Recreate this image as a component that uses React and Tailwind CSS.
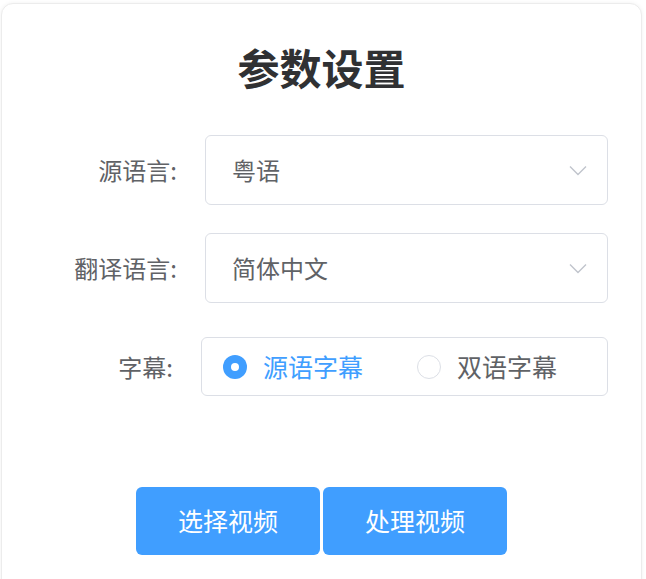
import { useState } from 'react';

const font = { fontFamily: '"Noto Sans CJK SC", "Noto Sans", sans-serif' };

function Chevron() {
  return (
    <svg width="18" height="11" viewBox="0 0 18 11" fill="none">
      <polyline points="1,1.5 9,9.5 17,1.5" stroke="#c0c4cc" strokeWidth="1.4" />
    </svg>
  );
}

function SelectBox({ value }) {
  return (
    <div className="ml-[28px] flex h-[70px] w-[403px] items-center justify-between rounded-[6px] border border-[#dcdfe6] bg-white pl-[26px] pr-[20px]">
      <span className="text-[24px] leading-none text-[#606266]">{value}</span>
      <Chevron />
    </div>
  );
}

function Radio({ checked, label, onClick }) {
  return (
    <button type="button" onClick={onClick} className="flex items-center gap-[16px]">
      {checked ? (
        <span className="flex h-[24px] w-[24px] items-center justify-center rounded-full bg-[#409eff]">
          <span className="h-[8px] w-[8px] rounded-full bg-white" />
        </span>
      ) : (
        <span className="h-[24px] w-[24px] rounded-full border border-[#dcdfe6] bg-white" />
      )}
      <span className={'text-[25px] leading-none ' + (checked ? 'text-[#409eff]' : 'text-[#606266]')}>{label}</span>
    </button>
  );
}

export default function App() {
  const [sub, setSub] = useState('source');

  return (
    <div className="min-h-[579px] bg-white pl-[1px] pr-[4px] pt-[3px]" style={font}>
      <div className="h-[600px] rounded-[12px] border border-[#ececec] bg-white shadow-[0_0_4px_rgba(0,0,0,0.06)]">
        <h1 className="pt-[42px] text-center text-[42px] font-bold leading-[42px] text-[#303133]">参数设置</h1>

        <div className="mt-[47px] flex flex-col">
          <div className="flex items-center">
            <label className="w-[175px] text-right text-[24px] leading-none text-[#606266]">源语言:</label>
            <SelectBox value="粤语" />
          </div>

          <div className="mt-[28px] flex items-center">
            <label className="w-[175px] text-right text-[24px] leading-none text-[#606266]">翻译语言:</label>
            <SelectBox value="简体中文" />
          </div>

          <div className="mt-[34px] flex items-center">
            <label className="w-[171px] text-right text-[24px] leading-none text-[#606266]">字幕:</label>
            <div className="ml-[28px] flex h-[59px] w-[407px] items-center gap-[54px] rounded-[6px] border border-[#dcdfe6] pl-[21px]">
              <Radio checked={sub === 'source'} label="源语字幕" onClick={() => setSub('source')} />
              <Radio checked={sub === 'dual'} label="双语字幕" onClick={() => setSub('dual')} />
            </div>
          </div>
        </div>

        <div className="mt-[91px] flex justify-center gap-[3px]">
          <button type="button" className="h-[68px] w-[184px] rounded-[6px] bg-[#409eff] text-[25px] text-white">选择视频</button>
          <button type="button" className="h-[68px] w-[184px] rounded-[6px] bg-[#409eff] text-[25px] text-white">处理视频</button>
        </div>
      </div>
    </div>
  );
}
